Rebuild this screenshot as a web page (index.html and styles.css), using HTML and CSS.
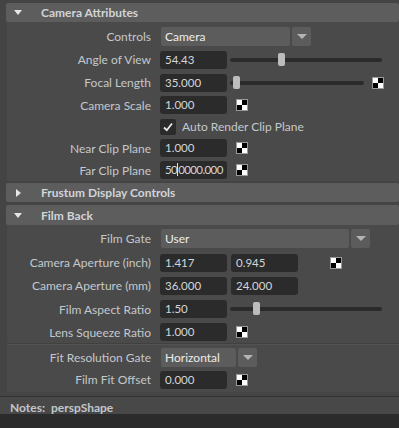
FILE: index.html
```html
<!DOCTYPE html>
<html lang="en">
  <head>
    <meta charset="UTF-8" />
    <title>perspShape</title>
    <link rel="stylesheet" href="styles.css">
  </head>
  <body>
    <div class="editor">
      <div class="scroll">
        <div class="frame-header">
          <span class="tri-down"></span>
          <span class="frame-title">Camera Attributes</span>
        </div>
        <div class="frame-body">
          <div class="row r-controls">
            <label>Controls</label>
            <div class="combo" style="width: 129px">Camera</div>
            <div class="combo-btn"><span class="arrow"></span></div>
          </div>
          <div class="row r-aov">
            <label>Angle of View</label>
            <div class="field">54.43</div>
            <div class="slider" style="width: 152px"><span class="thumb" style="left: 48px"></span></div>
          </div>
          <div class="row r-focal">
            <label>Focal Length</label>
            <div class="field">35.000</div>
            <div class="slider" style="width: 134px"><span class="thumb" style="left: 3px"></span></div>
            <span class="map map-far"></span>
          </div>
          <div class="row r-scale">
            <label>Camera Scale</label>
            <div class="field">1.000</div>
            <span class="map"></span>
          </div>
          <div class="row r-check">
            <label></label>
            <span class="checkbox">
              <svg width="16" height="16" viewBox="0 0 16 16"><path d="M4 8.5 L6.8 11.2 L12 4.5" fill="none" stroke="#e8e8e8" stroke-width="1.8"/></svg>
            </span>
            <span class="check-label">Auto Render Clip Plane</span>
          </div>
          <div class="row r-near">
            <label>Near Clip Plane</label>
            <div class="field">1.000</div>
            <span class="map"></span>
          </div>
          <div class="row r-far">
            <label>Far Clip Plane</label>
            <div class="field tight">50<span class="caret"></span>0000.000</div>
            <span class="map"></span>
          </div>
        </div>

        <div class="frame-header closed">
          <span class="tri-right"></span>
          <span class="frame-title">Frustum Display Controls</span>
        </div>

        <div class="frame-header film">
          <span class="tri-down"></span>
          <span class="frame-title">Film Back</span>
        </div>
        <div class="frame-body">
          <div class="row r-gate">
            <label>Film Gate</label>
            <div class="combo" style="width: 188px">User</div>
            <div class="combo-btn"><span class="arrow"></span></div>
          </div>
          <div class="row r-inch">
            <label>Camera Aperture (inch)</label>
            <div class="field">1.417</div>
            <div class="field second">0.945</div>
            <span class="map map-wide"></span>
          </div>
          <div class="row r-mm">
            <label>Camera Aperture (mm)</label>
            <div class="field">36.000</div>
            <div class="field second">24.000</div>
          </div>
          <div class="row r-aspect">
            <label>Film Aspect Ratio</label>
            <div class="field">1.50</div>
            <div class="slider" style="width: 152px"><span class="thumb" style="left: 23px"></span></div>
          </div>
          <div class="row r-lens">
            <label>Lens Squeeze Ratio</label>
            <div class="field">1.000</div>
            <span class="map"></span>
          </div>
          <div class="separator"></div>
          <div class="row r-fit">
            <label>Fit Resolution Gate</label>
            <div class="combo" style="width: 75px">Horizontal</div>
            <div class="combo-btn"><span class="arrow"></span></div>
          </div>
          <div class="row r-offset">
            <label>Film Fit Offset</label>
            <div class="field">0.000</div>
            <span class="map"></span>
          </div>
          <div class="row r-next">
            <label></label>
            <div class="field"></div>
            <div class="field second"></div>
          </div>
        </div>
      </div>

      <div class="notes">
        <b>Notes:</b>
        <b>perspShape</b>
      </div>
      <div class="notes-area"></div>
    </div>
  </body>
</html>
```

FILE: styles.css
```css
body {
  margin: 0;
  background: #2b2b2b;
  font-family: Lato, "Liberation Sans", Arial, sans-serif;
  font-size: 12px;
  color: #c8c8c8;
}

.editor {
  width: 399px;
  height: 428px;
  display: flex;
  flex-direction: column;
  background: #444444;
  overflow: hidden;
}

.scroll {
  height: 392px;
  flex-shrink: 0;
  overflow: hidden;
  padding-top: 3px;
  box-sizing: border-box;
}

/* collapsible frame headers */
.frame-header {
  margin-left: 6px;
  height: 19px;
  background: #5d5d5d;
  border-radius: 2px;
  display: flex;
  align-items: center;
  color: #d0d4d8;
  font-weight: bold;
}

.frame-header.closed {
  margin-top: 2px;
}

.frame-header.film {
  margin-top: 3px;
  height: 20px;
}

.frame-title {
  margin-left: 19px;
}

.tri-down {
  margin-left: 8px;
  width: 0;
  height: 0;
  border-left: 4px solid transparent;
  border-right: 4px solid transparent;
  border-top: 5px solid #e6e6e6;
}

.tri-right {
  margin-left: 10px;
  width: 0;
  height: 0;
  border-top: 4px solid transparent;
  border-bottom: 4px solid transparent;
  border-left: 5px solid #e6e6e6;
}

.tri-right + .frame-title {
  margin-left: 20px;
}

.frame-body {
  margin-left: 7px;
  background: #4a4a4a;
  padding-top: 1px;
}

/* attribute rows */
.row {
  display: flex;
  align-items: center;
  height: 23px;
}

.row label {
  width: 144px;
  flex-shrink: 0;
  text-align: right;
  margin-right: 9px;
  color: #c4c8cc;
}

.r-controls { height: 24px; margin-top: 1px; }
.r-scale { height: 22px; }
.r-check { height: 21px; }
.r-near { height: 22px; }
.r-far { height: 22px; }

.r-gate { height: 25px; }
.r-aspect { height: 24px; }
.r-lens { height: 22px; }
.r-fit { height: 22px; }
.r-next { align-items: flex-start; padding-top: 1px; }

.field {
  width: 67px;
  height: 18px;
  line-height: 18px;
  background: #2b2b2b;
  border-radius: 3px;
  padding-left: 5px;
  box-sizing: border-box;
  color: #d2d6da;
  font-size: 11.5px;
  white-space: nowrap;
}

.field.second {
  margin-left: 4px;
}

.field.tight {
  letter-spacing: -0.6px;
}

.caret {
  display: inline-block;
  width: 1px;
  height: 13px;
  background: #e0e0e0;
  vertical-align: -2px;
}

.combo {
  margin-left: 1px;
  height: 19px;
  line-height: 19px;
  background: #5c5c5c;
  border-radius: 2px;
  padding-left: 4px;
  box-sizing: border-box;
  color: #ececec;
}

.combo-btn {
  margin-left: 2px;
  width: 19px;
  height: 19px;
  background: #5c5c5c;
  border-radius: 2px;
  display: flex;
  align-items: center;
  justify-content: center;
}

.arrow {
  width: 0;
  height: 0;
  border-left: 5px solid transparent;
  border-right: 5px solid transparent;
  border-top: 5px solid #b4b4b4;
}

.slider {
  position: relative;
  margin-left: 3px;
  height: 4px;
  background: #2b2b2b;
  border-radius: 2px;
}

.thumb {
  position: absolute;
  top: -5px;
  width: 7px;
  height: 13px;
  background: #bdbdbd;
  border-radius: 2px;
}

.map {
  margin-left: 9px;
  width: 12px;
  height: 12px;
  box-sizing: border-box;
  border: 1px solid #9a9a9a;
  background:
    linear-gradient(#000, #000) right top / 5px 5px no-repeat,
    linear-gradient(#000, #000) left bottom / 5px 5px no-repeat,
    #fff;
}

.map-far {
  margin-left: 8px;
}

.map-wide {
  margin-left: 32px;
}

.checkbox {
  width: 16px;
  height: 16px;
  background: #2b2b2b;
  border-radius: 2px;
}

.checkbox svg {
  display: block;
}

.check-label {
  margin-left: 6px;
  color: #c4c8cc;
}

.separator {
  height: 1px;
  margin: 0 0 1px 0;
  background: #404040;
  border-bottom: 1px solid #525252;
}

/* notes */
.notes {
  flex-shrink: 0;
  margin-top: 4px;
  border-top: 1px solid #333333;
  height: 18px;
  box-sizing: border-box;
  padding: 4px 0 0 10px;
  display: flex;
  gap: 6px;
  line-height: 14px;
  background: #484848;
  color: #c2c6ca;
}

.notes-area {
  flex: 1;
  background: #2b2b2b;
}
```
